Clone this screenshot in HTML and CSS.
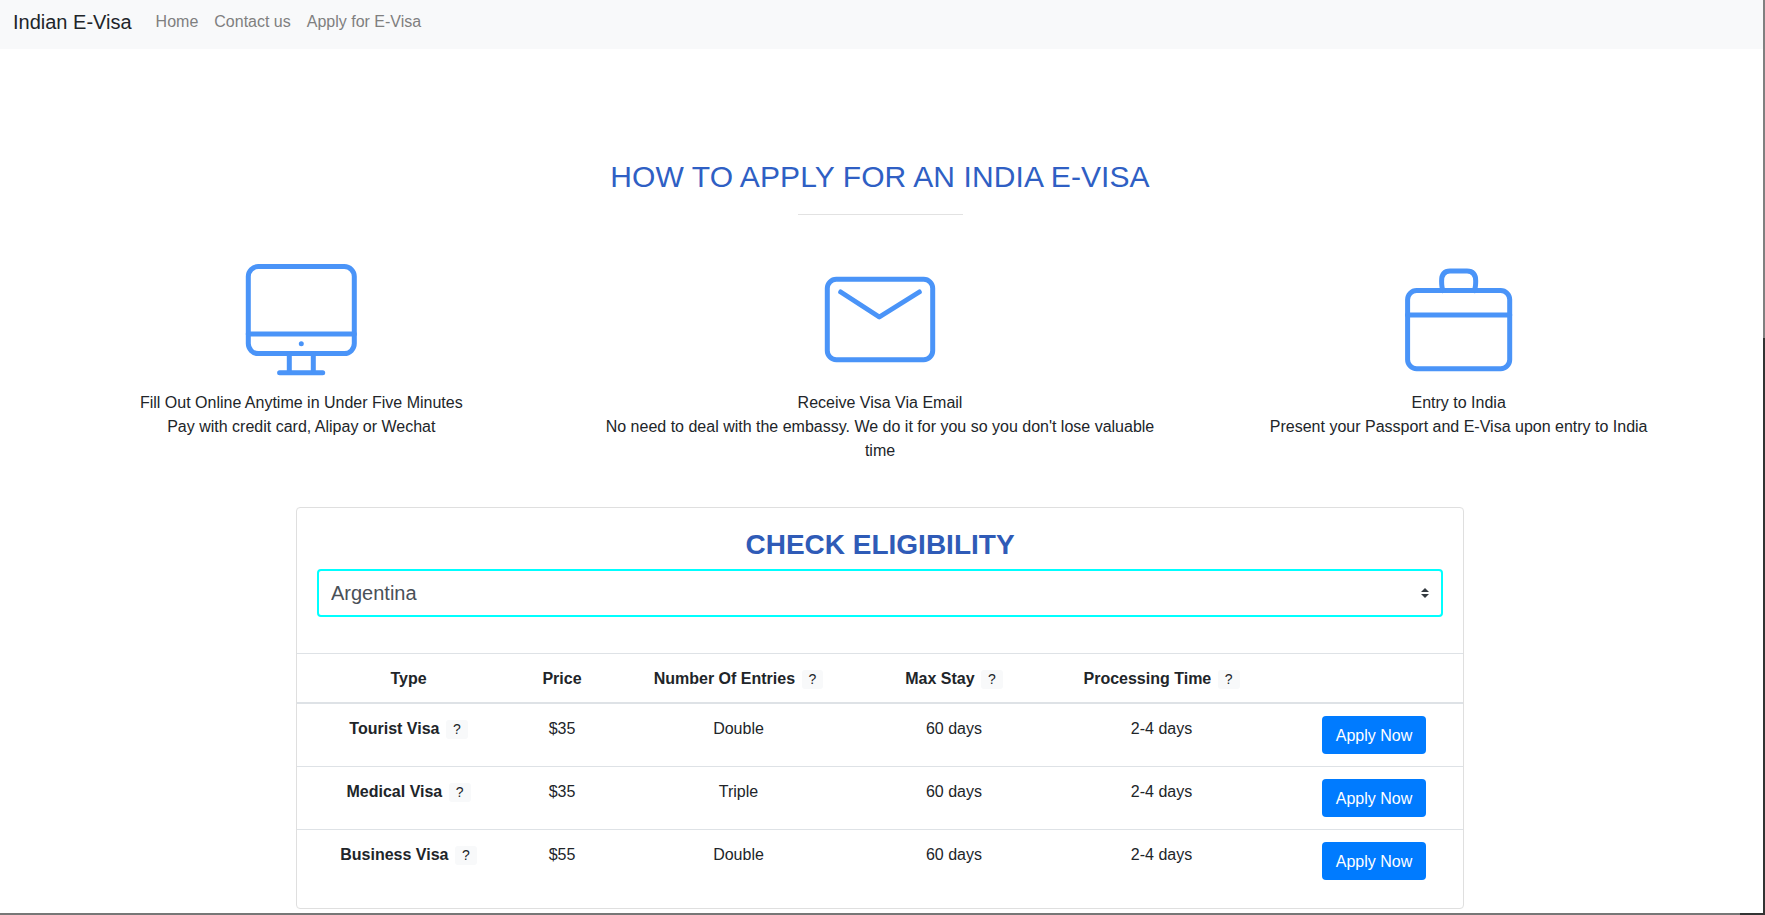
FILE: index.html
```html
<!DOCTYPE html>
<html lang="en">

<head>
    <meta charset="UTF-8">
    <title>Indian E-Visa</title>
    <link rel="stylesheet" href="styles.css">
</head>

<body>
    <div class="page">
        <nav class="navbar">
            <a class="brand" href="#">Indian E-Visa</a>
            <a class="nav-link" href="#">Home</a>
            <a class="nav-link" href="#">Contact us</a>
            <a class="nav-link" href="#">Apply for E-Visa</a>
        </nav>

        <main class="content">
            <h2 class="how-title">HOW TO APPLY FOR AN INDIA E-VISA</h2>
            <hr class="how-rule">

            <div class="steps">
                <div class="step">
                    <svg class="step-icon" viewBox="0 0 120 120">
                        <rect x="7.3" y="6.6" width="106" height="87" rx="10" />
                        <path d="M7.3 74H113.3M48.3 93.7V112.7M72.3 93.7V112.7M38.6 112.7H81.7" />
                        <circle class="icon-dot" cx="60.3" cy="83.7" r="2.5" />
                    </svg>
                    <p>Fill Out Online Anytime in Under Five Minutes<br>Pay with credit card, Alipay or Wechat</p>
                </div>
                <div class="step">
                    <svg class="step-icon" viewBox="0 0 120 120">
                        <rect x="7.3" y="19.3" width="105.4" height="80.4" rx="9" />
                        <path d="M20.7 32L59.3 57L99.3 32" />
                    </svg>
                    <p>Receive Visa Via Email<br>No need to deal with the embassy. We do it for you so you don't lose valuable time</p>
                </div>
                <div class="step">
                    <svg class="step-icon" viewBox="0 0 120 120">
                        <rect x="8.6" y="30.6" width="102.1" height="78.1" rx="9" />
                        <path d="M8.6 55H110.7M44 30.6C42.8 28 42.6 26 42.6 21C42.6 14 46 11 51 11H68C73.5 11 76.7 14 76.7 21C76.7 26 76.5 28 75.3 30.6" />
                    </svg>
                    <p>Entry to India<br>Present your Passport and E-Visa upon entry to India</p>
                </div>
            </div>

            <section class="card">
                <div class="card-head">
                    <h2 class="card-title">CHECK ELIGIBILITY</h2>
                    <select class="country-select">
                        <option>Argentina</option>
                        <option>Australia</option>
                        <option>Brazil</option>
                        <option>Canada</option>
                    </select>
                </div>

                <table class="visa-table">
                    <colgroup>
                        <col class="col-type">
                        <col class="col-price">
                        <col class="col-entries">
                        <col class="col-stay">
                        <col class="col-time">
                        <col class="col-action">
                    </colgroup>
                    <thead>
                        <tr>
                            <th>Type</th>
                            <th>Price</th>
                            <th>Number Of Entries <span class="hint">?</span></th>
                            <th>Max Stay <span class="hint">?</span></th>
                            <th>Processing Time <span class="hint">?</span></th>
                            <th></th>
                        </tr>
                    </thead>
                    <tbody>
                        <tr>
                            <td class="visa-type">Tourist Visa <span class="hint">?</span></td>
                            <td>$35</td>
                            <td>Double</td>
                            <td>60 days</td>
                            <td>2-4 days</td>
                            <td class="action-cell"><button class="apply-btn" type="button">Apply Now</button></td>
                        </tr>
                        <tr>
                            <td class="visa-type">Medical Visa <span class="hint">?</span></td>
                            <td>$35</td>
                            <td>Triple</td>
                            <td>60 days</td>
                            <td>2-4 days</td>
                            <td class="action-cell"><button class="apply-btn" type="button">Apply Now</button></td>
                        </tr>
                        <tr>
                            <td class="visa-type">Business Visa <span class="hint">?</span></td>
                            <td>$55</td>
                            <td>Double</td>
                            <td>60 days</td>
                            <td>2-4 days</td>
                            <td class="action-cell"><button class="apply-btn" type="button">Apply Now</button></td>
                        </tr>
                    </tbody>
                </table>
            </section>
        </main>
    </div>
</body>

</html>
```

FILE: styles.css
```css
* {
    box-sizing: border-box;
}

body {
    margin: 0;
    height: 915px;
    overflow: hidden;
    font-family: "Liberation Sans", Arial, sans-serif;
    font-size: 16px;
    line-height: 24px;
    color: #212529;
    /* dark window edge along the right and bottom */
    background:
        linear-gradient(#808080 338px, #333 338px) right top / 2px 100% no-repeat,
        linear-gradient(90deg, #777 1740px, #333 1740px) left bottom / 100% 2px no-repeat,
        #fff;
}

.page {
    width: 1763px;
    height: 913px;
    overflow: hidden;
    background-color: #fff;
}

.navbar {
    display: flex;
    align-items: center;
    height: 49px;
    padding: 0 13px 5px;
    background-color: #f8f9fa;
}

.brand {
    margin-right: 16px;
    font-size: 20px;
    line-height: 30px;
    color: #212529;
    text-decoration: none;
}

.nav-link {
    padding: 0 8px;
    color: #7f7f7f;
    text-decoration: none;
}

.content {
    padding: 109px 15px 0 12px;
}

.how-title {
    margin: 0;
    font-size: 30px;
    font-weight: 400;
    line-height: 38px;
    letter-spacing: 0.1px;
    text-align: center;
    color: #2f5fc4;
}

.how-rule {
    width: 165px;
    height: 1px;
    margin: 18px auto 45px;
    border: 0;
    background-color: #e2e2e2;
}

.steps {
    display: grid;
    grid-template-columns: repeat(3, 1fr);
}

.step {
    padding: 0 15px;
    text-align: center;
}

.step p {
    margin: 11px 0 0;
}

.step-icon {
    display: block;
    width: 120px;
    height: 120px;
    margin: 0 auto;
    fill: none;
    stroke: #4a94f8;
    stroke-width: 5;
    stroke-linecap: round;
    stroke-linejoin: round;
}

.icon-dot {
    fill: #4a94f8;
    stroke: none;
}

.card {
    width: 1168px;
    margin: 44px auto 0;
    border: 1px solid #dfdfdf;
    border-radius: 4px;
}

.card-head {
    padding: 20px 20px 36px;
}

.card-title {
    margin: 0 0 7px;
    font-size: 28px;
    font-weight: 700;
    line-height: 34px;
    text-align: center;
    color: #2f5bb7;
}

.country-select {
    display: block;
    width: 100%;
    height: 48px;
    padding: 0 32px 0 12px;
    border: 2px solid #00ffff;
    border-radius: 4px;
    outline: none;
    appearance: none;
    font-family: inherit;
    font-size: 20px;
    color: #495057;
    background: #fff url("data:image/svg+xml,%3csvg xmlns='http://www.w3.org/2000/svg' viewBox='0 0 4 5'%3e%3cpath fill='%23343a40' d='M2 0L0 2h4zm0 5L0 3h4z'/%3e%3c/svg%3e") no-repeat right 12px center / 8px 10px;
}

.visa-table {
    width: 100%;
    margin-bottom: 16px;
    border-collapse: collapse;
    table-layout: fixed;
}

.col-type { width: 223px; }
.col-price { width: 84px; }
.col-entries { width: 269px; }
.col-stay { width: 162px; }
.col-time { width: 253px; }

.visa-table th,
.visa-table td {
    padding: 13px 12px 11px;
    text-align: center;
    vertical-align: top;
    border-top: 1px solid #dee2e6;
}

.visa-table thead th {
    border-bottom: 2px solid #dee2e6;
}

.visa-table thead + tbody tr:first-child td {
    border-top: 0;
}

.visa-type {
    font-weight: 700;
}

.hint {
    display: inline-block;
    margin-left: 2px;
    padding: 0 7px;
    border-radius: 3px;
    font-size: 14px;
    font-weight: 400;
    line-height: 19px;
    vertical-align: 0;
    background-color: #f8f9fa;
}

.visa-table .action-cell {
    padding: 12px 15px 12px 12px;
}

.apply-btn {
    display: block;
    width: 104px;
    height: 38px;
    margin: 0 auto;
    padding: 2px 0 0;
    border: 0;
    border-radius: 4px;
    font-family: inherit;
    font-size: 16px;
    color: #fff;
    background-color: #007bff;
    cursor: pointer;
}

.apply-btn:hover {
    background-color: #0069d9;
}
```
